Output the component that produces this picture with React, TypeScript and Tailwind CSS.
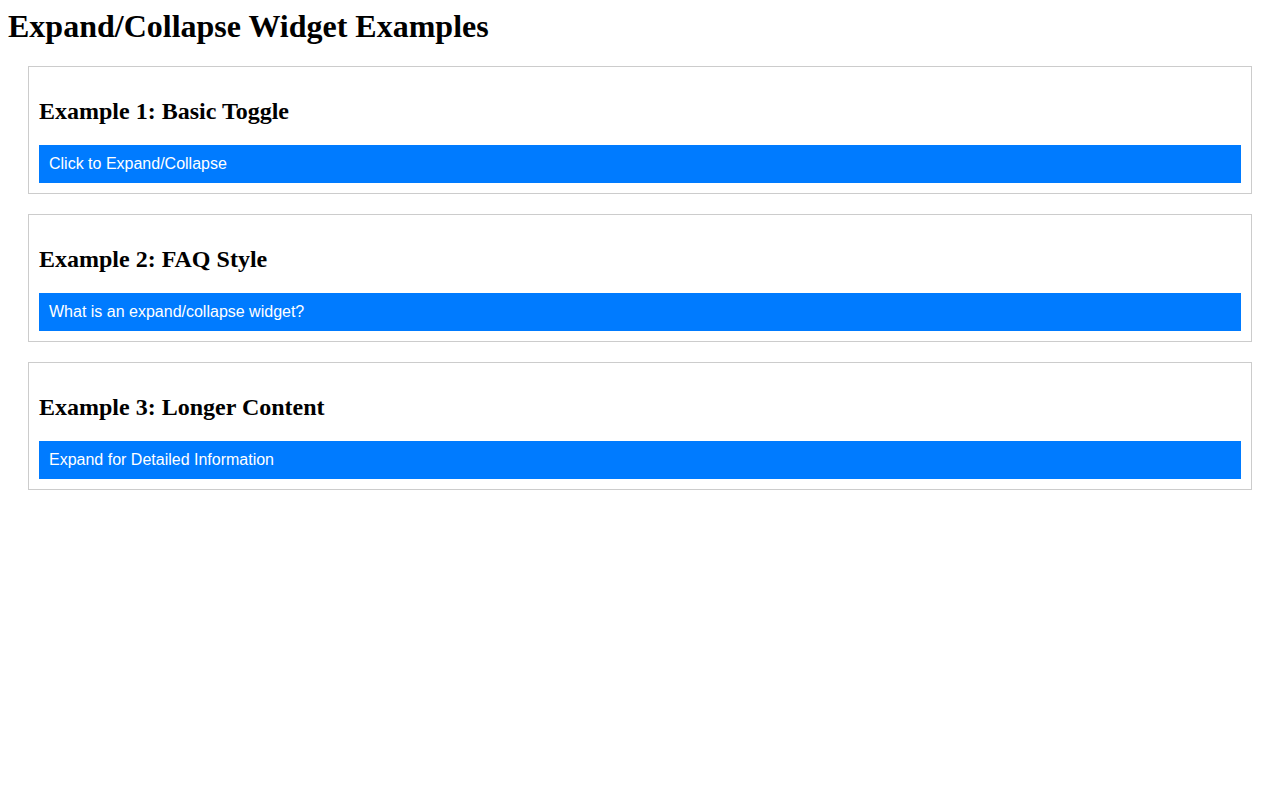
const examples = [
  { title: "Example 1: Basic Toggle", label: "Click to Expand/Collapse" },
  { title: "Example 2: FAQ Style", label: "What is an expand/collapse widget?" },
  { title: "Example 3: Longer Content", label: "Expand for Detailed Information" },
];

export default function App() {
  return (
    <div className="min-h-[800px] bg-white p-2 font-['Liberation_Serif','Times_New_Roman',serif] text-black">
      <h1 className="m-0 mb-[21px] text-[32px] font-bold leading-[37px]">
        Expand/Collapse Widget Examples
      </h1>

      <div className="flex flex-col gap-5 px-5">
        {examples.map((ex) => (
          <div key={ex.title} className="border border-[#ccc] p-[10px]">
            <h2 className="my-5 text-[24px] font-bold leading-[28px]">{ex.title}</h2>
            <button
              type="button"
              className="block w-full bg-[#007bff] p-[10px] text-left font-['Liberation_Sans',Arial,sans-serif] text-base leading-[18px] text-white"
            >
              {ex.label}
            </button>
          </div>
        ))}
      </div>
    </div>
  );
}
